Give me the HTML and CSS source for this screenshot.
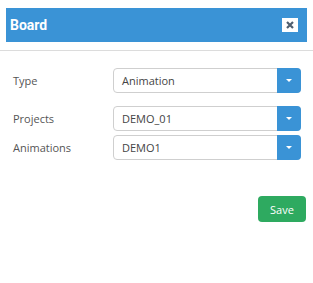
FILE: index.html
```html
<!DOCTYPE html>
<html lang="en">
<head>
    <meta charset="UTF-8">
    <title>Board</title>
    <link rel="stylesheet" href="styles.css">
</head>
<body>
    <div class="header">
        <h1>Board</h1>
        <button class="close" type="button">
            <svg width="8" height="8" viewBox="0 0 8 8"><path d="M1 1L7 7M7 1L1 7" stroke="#4f5f70" stroke-width="2.2"/></svg>
        </button>
    </div>

    <form class="board-form">
        <div class="form-group type-group">
            <label>Type</label>
            <div class="select">
                <span class="value">Animation</span>
                <span class="arrow"></span>
            </div>
        </div>
        <div class="form-group">
            <label>Projects</label>
            <div class="select">
                <span class="value">DEMO_01</span>
                <span class="arrow"></span>
            </div>
        </div>
        <div class="form-group">
            <label>Animations</label>
            <div class="select">
                <span class="value">DEMO1</span>
                <span class="arrow"></span>
            </div>
        </div>
        <div class="actions">
            <button type="button" class="btn-save">Save</button>
        </div>
    </form>
</body>
</html>
```

FILE: styles.css
```css
* {
    margin: 0;
    padding: 0;
    box-sizing: border-box;
}

body {
    font-family: 'Open Sans', 'Noto Sans', sans-serif;
    background-color: #fff;
    width: 313px;
    height: 283px;
}

.header {
    margin: 8px 6px 0 6px;
    height: 34px;
    background-color: #3a93d6;
    display: flex;
    align-items: center;
    justify-content: space-between;
    padding: 0 9px 0 4px;
}

.header h1 {
    font-family: 'Roboto', sans-serif;
    font-size: 14px;
    font-weight: bold;
    color: #fff;
}

.close {
    width: 16px;
    height: 14px;
    border: none;
    background-color: #fff;
    display: flex;
    align-items: center;
    justify-content: center;
    cursor: pointer;
}

.board-form {
    margin-top: 8px;
    border-top: 1px solid #dcdcdc;
    padding: 17px 12px 0 13px;
}

.form-group {
    display: flex;
    align-items: center;
    margin-bottom: 4px;
}

.type-group {
    margin-bottom: 13px;
}

label {
    width: 100px;
    font-size: 11px;
    color: #555;
}

.select {
    width: 188px;
    height: 25px;
    border: 1px solid #cfcfcf;
    border-radius: 4px;
    display: flex;
    align-items: center;
    justify-content: space-between;
}

.select .value {
    padding-left: 8px;
    font-size: 11px;
    color: #444;
}

.select .arrow {
    width: 24px;
    height: 25px;
    margin-right: -1px;
    background-color: #3a93d6;
    border-radius: 0 4px 4px 0;
    display: flex;
    align-items: center;
    justify-content: center;
}

.select .arrow::after {
    content: '';
    border-left: 3px solid transparent;
    border-right: 3px solid transparent;
    border-top: 3px solid #fff;
}

.actions {
    display: flex;
    justify-content: flex-end;
    margin-top: 36px;
    margin-right: -5px;
}

.btn-save {
    width: 48px;
    height: 26px;
    border: none;
    border-radius: 4px;
    background-color: #2eaa60;
    color: #fff;
    font-family: 'Open Sans', sans-serif;
    font-size: 11px;
    cursor: pointer;
}
```
